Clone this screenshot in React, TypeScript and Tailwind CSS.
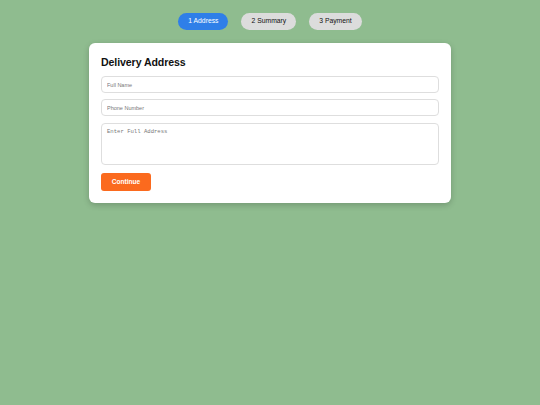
import React from 'react';

const steps = ['1 Address', '2 Summary', '3 Payment'];

export default function App() {
    return (
        <div className="min-h-screen w-full bg-[#8fbc8f] flex flex-col items-center pt-[13px]" style={{ fontFamily: '"Liberation Sans", Arial, sans-serif' }}>
            {/* Steps */}
            <div className="flex gap-[13px] mb-[13px]">
                {steps.map((s, i) => (
                    <div
                        key={s}
                        className={`h-[17px] px-[10px] rounded-full flex items-center text-[6.8px] ${
                            i === 0 ? 'bg-[#2f7fe8] text-white' : 'bg-[#dcdcdc] text-[#111]'
                        }`}
                    >
                        {s}
                    </div>
                ))}
            </div>

            {/* Card */}
            <div className="w-[362px] bg-white rounded-[6px] shadow-[0_2px_6px_rgba(0,0,0,0.2)] p-[12px]">
                <h2 className="text-[10.6px] leading-[15px] font-bold text-[#111] mb-[6px] tracking-[-0.1px]">Delivery Address</h2>
                <div className="flex flex-col gap-[6px]">
                    <input
                        placeholder="Full Name"
                        className="h-[17px] w-full border border-[#dedede] rounded-[4px] px-[5px] text-[5.5px] placeholder:text-[#777] outline-none"
                    />
                    <input
                        placeholder="Phone Number"
                        className="h-[17px] w-full border border-[#dedede] rounded-[4px] px-[5px] text-[5.5px] placeholder:text-[#777] outline-none"
                    />
                    <textarea
                        placeholder="Enter Full Address"
                        className="mt-[1px] h-[42px] w-full border border-[#dedede] rounded-[4px] px-[5px] py-[4px] text-[5.6px] placeholder:text-[#777] outline-none resize-none"
                        style={{ fontFamily: '"Liberation Mono", monospace' }}
                    />
                </div>
                <button className="mt-[8px] h-[18px] w-[50px] bg-[#fb6a1e] text-white text-[6.6px] font-bold rounded-[3px]">
                    Continue
                </button>
            </div>
        </div>
    );
}
